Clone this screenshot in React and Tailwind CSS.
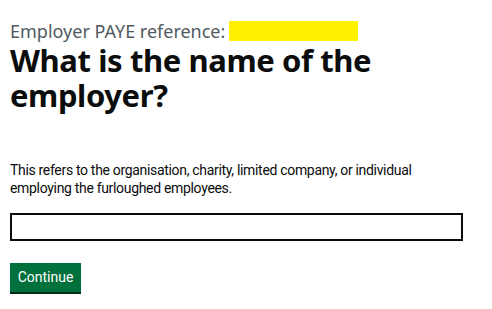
export default function App() {
  return (
    <div className="w-[492px] h-[309px] bg-white px-[10px] pt-[19px]" style={{ fontFamily: '"Noto Sans", Arial, sans-serif' }}>
      <div className="flex items-center h-[24px] text-[18px] leading-[24px] text-[#505a5f]">
        <span>Employer PAYE reference:</span>
        <span className="ml-[4px] inline-block w-[129px] h-[20px] bg-[#fff200]" />
      </div>
      <h1 className="text-[31px] leading-[35px] font-bold text-[#0b0c0c] tracking-[-0.4px]">
        What is the name of the
        <br />
        employer?
      </h1>
      <p className="mt-[48px] text-[14px] leading-[18px] text-[#0b0c0c] tracking-[-0.32px]" style={{ fontFamily: 'Roboto, "Noto Sans", sans-serif' }}>
        This refers to the organisation, charity, limited company, or individual
        <br />
        employing the furloughed employees.
      </p>
      <div className="mt-[16px] w-[453px] h-[28px] border-2 border-[#0b0c0c]" />
      <button className="mt-[22px] h-[29px] w-[71px] bg-[#00703c] text-white text-[14px] shadow-[0_2px_0_#002d18] leading-[27px] text-center" style={{ fontFamily: 'Roboto, "Noto Sans", sans-serif' }}>
        Continue
      </button>
    </div>
  );
}
